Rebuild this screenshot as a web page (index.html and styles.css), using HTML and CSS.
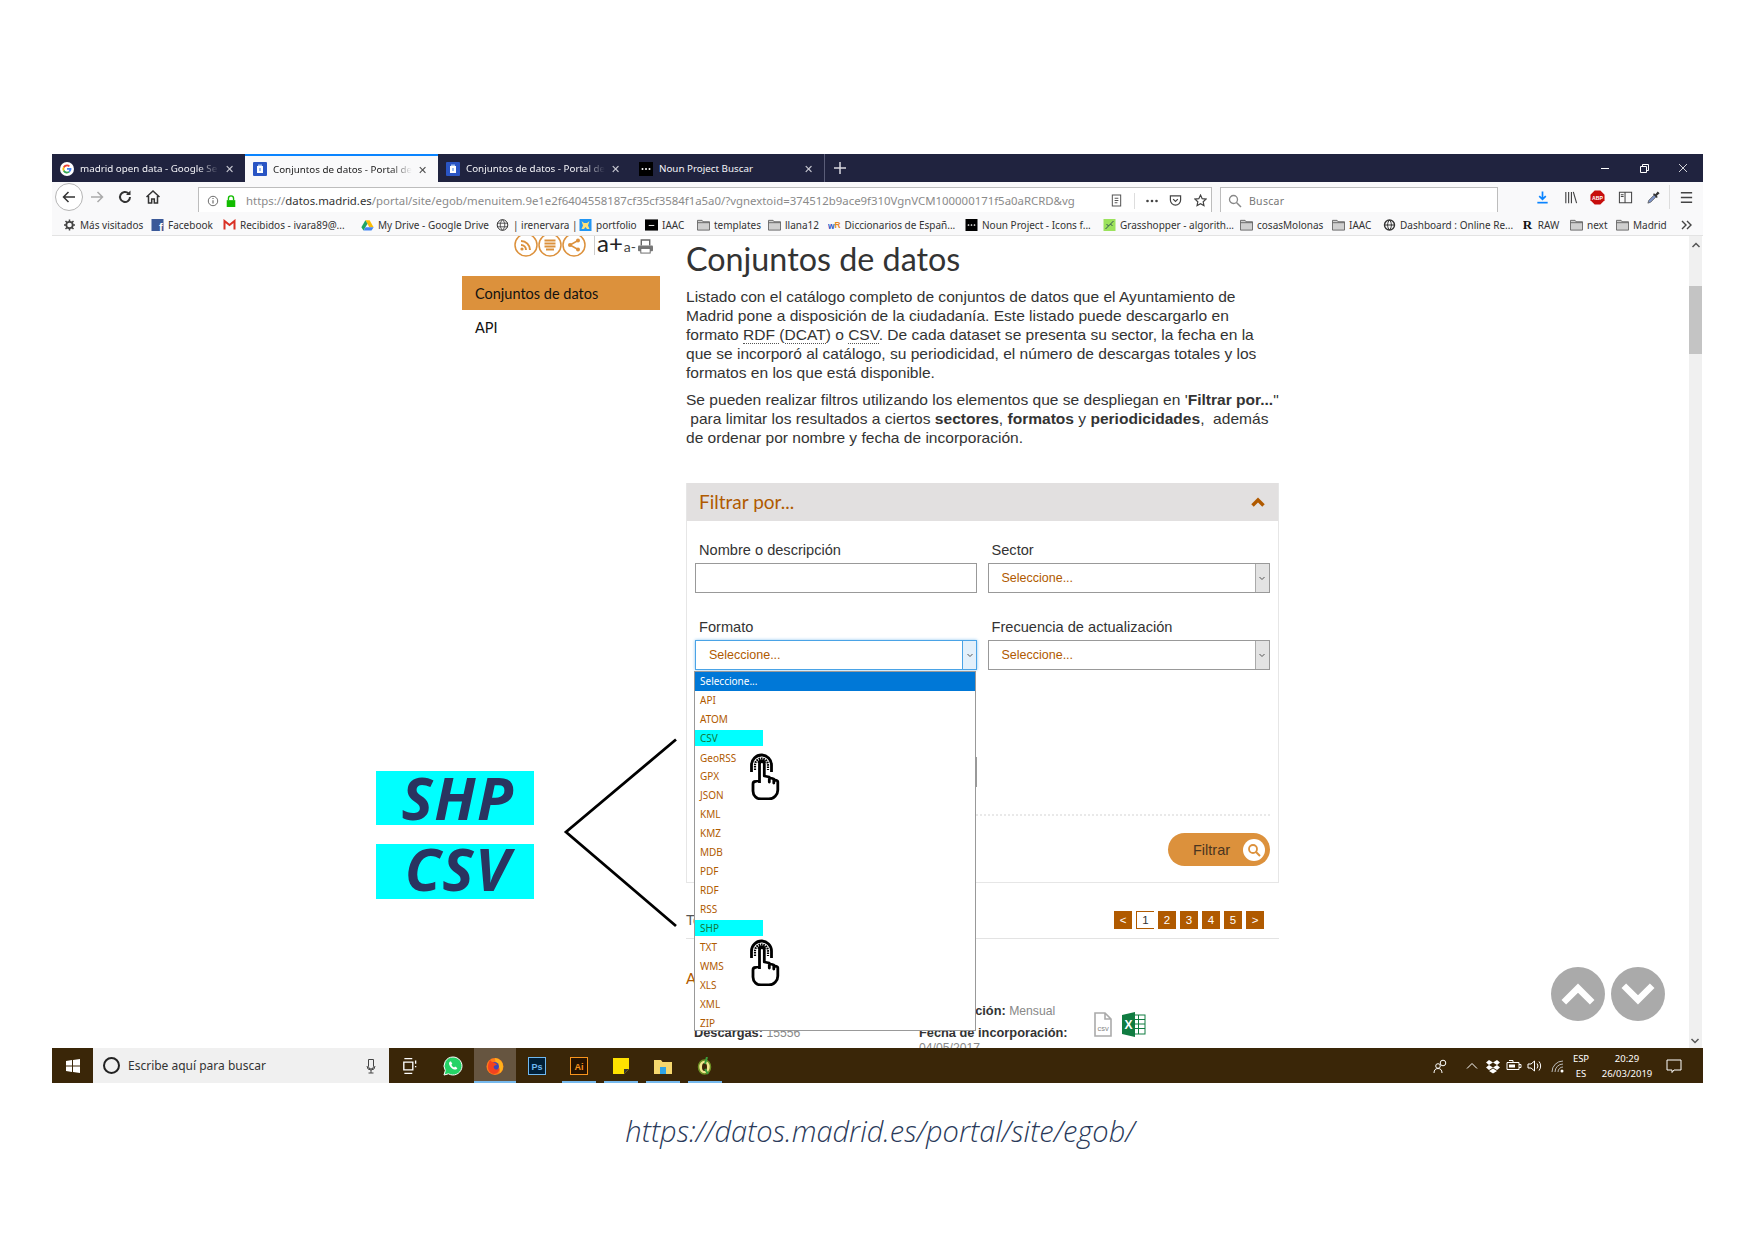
FILE: index.html
```html
<!DOCTYPE html>
<html lang="es">
<head>
<meta charset="utf-8">
<title>Conjuntos de datos</title>
<link rel="stylesheet" href="styles.css">
</head>
<body>
<svg class="sprite" width="0" height="0" aria-hidden="true">
  <symbol id="folder" viewBox="0 0 14 12"><path d="M.5 11.5V1h5l1 1.5h7v9z" fill="#cfcfcf" stroke="#666" stroke-width="1"/><path d="M.5 3.5h13" stroke="#666"/></symbol>
  <symbol id="madrid" viewBox="0 0 14 14"><rect width="14" height="14" rx="1" fill="#2a55c4"/><path d="M4 4h6v7H4z" fill="#fff"/><path d="M5 2.500h4V4H5zM6 6h2v3H6z" fill="#9fc0f0"/></symbol>
  <symbol id="noun" viewBox="0 0 14 14"><rect width="14" height="14" fill="#000"/><circle cx="3.500" cy="7" r="1" fill="#fff"/><circle cx="7" cy="7" r="1" fill="#fff"/><circle cx="10.500" cy="7" r="1" fill="#fff"/></symbol>
  <symbol id="hand" viewBox="0 0 30 47">
    <path d="M1.500 19V12A10 10 0 0 1 21.500 12V19" fill="none" stroke="#000" stroke-width="2.800"/>
    <path d="M5 17V12A6.500 6.500 0 0 1 18 12V17" fill="none" stroke="#000" stroke-width="2.200" stroke-dasharray="1.600 .8"/>
    <path d="M8.500 10A3.300 3.300 0 0 1 15 10" fill="none" stroke="#000" stroke-width="2"/>
    <path d="M9.500 30V11a2.400 2.400 0 0 1 4.800 0v12l5 1v5-4.500l4.500 1.500v4-3.500l3 1a1.500 1.500 0 0 1 1 1.500V37a9 9 0 0 1-9 9H11a8 8 0 0 1-8-8v-7a2.500 2.500 0 0 1 2.500-2.500l4-1" fill="#fff" stroke="#000" stroke-width="2.800" stroke-linejoin="round"/>
  </symbol>
  <symbol id="chev" viewBox="0 0 8 6"><path d="M1.500 2l2.500 2.500L6.500 2" fill="none" stroke="#555" stroke-width="1"/></symbol>
</svg>

<div class="page">
  <div class="browser">
    <div class="tabbar">
      <div class="tab">
        <svg class="tab-ico" viewBox="0 0 14 14"><circle cx="7" cy="7" r="7" fill="#fff"/><path d="M7 2.500a4.500 4.500 0 0 1 3 1.200L8.800 5A2.700 2.700 0 0 0 4.500 6L3 4.800A4.500 4.500 0 0 1 7 2.500z" fill="#ea4335"/><path d="M3 4.800L4.500 6a2.800 2.800 0 0 0 0 2L3 9.200a4.500 4.500 0 0 1 0-4.400z" fill="#fbbc05"/><path d="M3 9.200L4.500 8a2.700 2.700 0 0 0 4 1.200l1.400 1.100A4.500 4.500 0 0 1 3 9.200z" fill="#34a853"/><path d="M7 6h4.400a4.500 4.500 0 0 1-1.500 4.300L8.500 9.200A1.800 1.800 0 0 0 9.300 7.800H7z" fill="#4285f4"/></svg>
        <span class="tab-text">madrid open data - Google Se</span>
        <span class="tab-x">✕</span>
      </div>
      <div class="tab is-active">
        <svg class="tab-ico"><use href="#madrid"/></svg>
        <span class="tab-text">Conjuntos de datos - Portal de</span>
        <span class="tab-x">✕</span>
      </div>
      <div class="tab">
        <svg class="tab-ico"><use href="#madrid"/></svg>
        <span class="tab-text">Conjuntos de datos - Portal de</span>
        <span class="tab-x">✕</span>
      </div>
      <div class="tab is-last">
        <svg class="tab-ico"><use href="#noun"/></svg>
        <span class="tab-text">Noun Project Buscar</span>
        <span class="tab-x">✕</span>
      </div>
      <svg class="tab-plus" viewBox="0 0 12 12"><path d="M6 0v12M0 6h12" stroke="#d8d8e0" stroke-width="1.500"/></svg>
      <div class="winbtns">
        <svg viewBox="0 0 12 12"><path d="M2 6.500h8" stroke="#fff"/></svg>
        <svg viewBox="0 0 12 12"><path d="M2.500 4.500h6v6h-6zM4.500 4.500v-2h6v6h-2" fill="none" stroke="#fff"/></svg>
        <svg viewBox="0 0 12 12"><path d="M2 2l8 8M10 2l-8 8" stroke="#fff" stroke-width=".8"/></svg>
      </div>
    </div>

    <div class="toolbar">
      <div class="navbtn is-back"><svg viewBox="0 0 16 16"><path d="M14 8H2.500M7.500 3L2.500 8l5 5" fill="none" stroke="#333" stroke-width="1.500"/></svg></div>
      <div class="navbtn"><svg viewBox="0 0 16 16"><path d="M2 8h11.500M8.500 3l5 5-5 5" fill="none" stroke="#aaa" stroke-width="1.500"/></svg></div>
      <div class="navbtn"><svg viewBox="0 0 16 16"><path d="M13 8a5 5 0 1 1-1.500-3.600" fill="none" stroke="#333" stroke-width="2"/><path d="M13.500 1.500v4.500H9z" fill="#333"/></svg></div>
      <div class="navbtn"><svg viewBox="0 0 16 16"><path d="M1.500 8L8 2l6.500 6M3.500 7v7h3.200V10h2.600v4h3.200V7" fill="none" stroke="#333" stroke-width="1.500"/></svg></div>
      <div class="urlbar">
        <svg class="url-ico" viewBox="0 0 14 14"><circle cx="7" cy="7" r="5.500" fill="none" stroke="#555"/><path d="M7 6v4M7 3.500v1.200" stroke="#555" stroke-width="1.200"/></svg>
        <svg class="url-ico" viewBox="0 0 14 14"><rect x="2" y="6" width="10" height="8" fill="#12bc00"/><path d="M4 6V4a3 3 0 0 1 6 0v2" fill="none" stroke="#12bc00" stroke-width="1.600"/></svg>
        <span class="url-text">https://<b>datos.madrid.es</b>/portal/site/egob/menuitem.9e1e2f6404558187cf35cf3584f1a5a0/?vgnextoid=374512b9ace9f310VgnVCM100000171f5a0aRCRD&amp;vg</span>
        <svg class="url-act is-reader" viewBox="0 0 14 14"><path d="M2.500 1h9v12h-9zM5 4.500h4M5 7h4M5 9.500h3" fill="none" stroke="#555" stroke-width="1.100"/></svg>
        <i class="url-sep"></i>
        <svg class="url-dots" viewBox="0 0 14 14"><circle cx="2.500" cy="7" r="1.300" fill="#444"/><circle cx="7" cy="7" r="1.300" fill="#444"/><circle cx="11.500" cy="7" r="1.300" fill="#444"/></svg>
        <svg class="url-act is-pocket" viewBox="0 0 14 14"><path d="M1.500 2h11v4.500a5.500 5.500 0 0 1-11 0z" fill="none" stroke="#444" stroke-width="1.300"/><path d="M4.500 5.500L7 8l2.500-2.500" fill="none" stroke="#444" stroke-width="1.300"/></svg>
        <svg class="url-act is-star" viewBox="0 0 14 14"><path d="M7 1.200l1.800 3.800 4.100.5-3 2.900.8 4.100L7 10.500l-3.700 2 .8-4.100-3-2.900 4.100-.5z" fill="none" stroke="#444" stroke-width="1.300"/></svg>
      </div>
      <div class="searchbar">
        <svg class="url-ico" viewBox="0 0 14 14"><circle cx="5.500" cy="5.500" r="4" fill="none" stroke="#888" stroke-width="1.300"/><path d="M8.500 8.500l4.500 4.500" stroke="#888" stroke-width="1.500"/></svg>
        <span>Buscar</span>
      </div>
      <div class="tools">
        <svg viewBox="0 0 16 16"><path d="M8 1.500v8M4.500 6.500L8 10l3.500-3.500" fill="none" stroke="#0a84ff" stroke-width="1.800"/><path d="M2.500 13.500h11" stroke="#0a84ff" stroke-width="1.800"/></svg>
        <svg viewBox="0 0 16 16"><path d="M3 2v12M6 2v12M9 2v12M11 2l3.500 12" fill="none" stroke="#444" stroke-width="1.200"/></svg>
        <svg viewBox="0 0 16 16"><path d="M5 .5h6L15.500 5v6L11 15.500H5L.5 11V5z" fill="#c70d0c"/><text x="8" y="10.500" class="abp">ABP</text></svg>
        <svg viewBox="0 0 16 16"><path d="M1.500 2.500h13v11h-13zM7.500 2.500v11M3 5h3M3 7h3" fill="none" stroke="#444" stroke-width="1.100"/></svg>
        <svg viewBox="0 0 16 16"><path d="M2 14l1-3 6-6 2 2-6 6z" fill="#7d94c8" stroke="#555" stroke-width=".8"/><path d="M8.500 3.500l1.500 1 2.500-3 2 2-3 2.500 1 1.500-1 1-4-4z" fill="#333"/></svg>
        <i class="tool-sep"></i>
        <svg viewBox="0 0 16 16"><path d="M2 3h12M2 8h12M2 13h12" stroke="#444" stroke-width="1.500"/></svg>
      </div>
    </div>

    <div class="bookmarks">
      <span class="bm"><svg class="bm-ico" viewBox="0 0 12 12"><circle cx="6" cy="6" r="3.200" fill="none" stroke="#444" stroke-width="1.800"/><path d="M6 .5v2.500M6 9v2.500M.5 6h2.500M9 6h2.500M2 2l1.800 1.800M8.200 8.200L10 10M10 2L8.200 3.800M3.800 8.200L2 10" stroke="#444" stroke-width="1.500"/></svg>Más visitados</span>
      <span class="bm"><svg class="bm-ico" viewBox="0 0 12 12"><rect width="12" height="12" fill="#3b5998"/><text x="7.500" y="11.500" class="fb">f</text></svg>Facebook</span>
      <span class="bm"><svg class="bm-ico" viewBox="0 0 12 12"><path d="M1 10.500V2l5 4 5-4v8.500" fill="none" stroke="#d93025" stroke-width="2"/></svg>Recibidos - ivara89@...</span>
      <span class="bm"><svg class="bm-ico" viewBox="0 0 14 12"><path d="M4.700 1h4.600l4.300 7.300H9z" fill="#fbbc05"/><path d="M4.700 1L.4 8.300 2.700 12 7 4.700z" fill="#1fa463"/><path d="M2.700 12h8.600l2.300-3.700H5z" fill="#4285f4"/></svg>My Drive - Google Drive</span>
      <span class="bm"><svg class="bm-ico" viewBox="0 0 12 12"><circle cx="6" cy="6" r="5.300" fill="none" stroke="#333"/><path d="M.8 4.200h10.400M.8 7.800h10.400M6 .7C3 3.500 3 8.500 6 11.300 9 8.500 9 3.500 6 .7" fill="none" stroke="#333" stroke-width=".8"/></svg>| irenervara |</span>
      <span class="bm"><svg class="bm-ico" viewBox="0 0 12 12"><rect width="12" height="12" fill="#2196f3"/><path d="M2 2l2.500 2h3L10 2 8.500 6.500 10 10H7.500L6 8 4.500 10H2l1.500-3.500z" fill="#ffe27a"/></svg>portfolio</span>
      <span class="bm"><svg class="bm-ico" viewBox="0 0 14 12"><rect width="14" height="12" fill="#000"/><path d="M4 6.500h6" stroke="#fff"/></svg>IAAC</span>
      <span class="bm"><svg class="bm-ico"><use href="#folder"/></svg>templates</span>
      <span class="bm"><svg class="bm-ico"><use href="#folder"/></svg>llana12</span>
      <span class="bm"><svg class="bm-ico" viewBox="0 0 14 12"><text x="0" y="10" class="wr-w">w</text><text x="7" y="9" class="wr-r">R</text></svg>Diccionarios de Españ...</span>
      <span class="bm"><svg class="bm-ico"><use href="#noun"/></svg>Noun Project - Icons f...</span>
      <span class="bm"><svg class="bm-ico" viewBox="0 0 12 12"><rect width="12" height="12" fill="#9be25c"/><path d="M2 10L10 2M5 7l-2-2M7 5l2 2" stroke="#355" stroke-width="1"/></svg>Grasshopper - algorith...</span>
      <span class="bm"><svg class="bm-ico"><use href="#folder"/></svg>cosasMolonas</span>
      <span class="bm"><svg class="bm-ico"><use href="#folder"/></svg>IAAC</span>
      <span class="bm"><svg class="bm-ico" viewBox="0 0 12 12"><circle cx="6" cy="6" r="5" fill="none" stroke="#333" stroke-width="1.400"/><path d="M1 6h10M6 1C3.500 3.500 3.500 8.500 6 11 8.500 8.500 8.500 3.500 6 1" fill="none" stroke="#333"/></svg>Dashboard : Online Re...</span>
      <span class="bm"><b class="bm-r">R</b>RAW</span>
      <span class="bm"><svg class="bm-ico"><use href="#folder"/></svg>next</span>
      <span class="bm"><svg class="bm-ico"><use href="#folder"/></svg>Madrid</span>
      <svg class="bm-more" viewBox="0 0 12 10"><path d="M1 1l4 4-4 4M6 1l4 4-4 4" fill="none" stroke="#444" stroke-width="1.400"/></svg>
    </div>

    <div class="viewport">
      <aside class="side">
        <div class="share">
          <svg class="share-ico" viewBox="0 0 24 24"><circle cx="12" cy="12" r="11" fill="#fff" stroke="#dc913c" stroke-width="1.500"/><path d="M7 8a9 9 0 0 1 9 9M7 12a5 5 0 0 1 5 5" fill="none" stroke="#dc913c" stroke-width="2"/><circle cx="8" cy="16" r="1.600" fill="#dc913c"/></svg>
          <svg class="share-ico" viewBox="0 0 24 24"><circle cx="12" cy="12" r="11" fill="#fff" stroke="#dc913c" stroke-width="1.500"/><path d="M6.500 7.500h11M6.500 10.500h11M6.500 13.500h11M8 16.500h8" stroke="#dc913c" stroke-width="1.800"/></svg>
          <svg class="share-ico" viewBox="0 0 24 24"><circle cx="12" cy="12" r="11" fill="#fff" stroke="#dc913c" stroke-width="1.500"/><path d="M16 7.500L8 12l8 4.500" fill="none" stroke="#dc913c" stroke-width="1.500"/><circle cx="16" cy="7.500" r="2" fill="#dc913c"/><circle cx="8" cy="12" r="2" fill="#dc913c"/><circle cx="16" cy="16.500" r="2" fill="#dc913c"/></svg>
          <span class="font-up">a+</span><span class="font-down">a-</span>
          <svg class="print" viewBox="0 0 18 16"><path d="M4.500 7V1h9v6" fill="#fff" stroke="#666" stroke-width="1.500"/><rect x="1" y="7" width="16" height="6" rx="1" fill="#777"/><rect x="4" y="10" width="10" height="5" fill="#fff" stroke="#666"/></svg>
        </div>
        <a class="side-link is-current">Conjuntos de datos</a>
        <a class="side-link">API</a>
      </aside>

      <main class="main">
        <h1 class="title">Conjuntos de datos</h1>
        <p class="lead">Listado con el catálogo completo de conjuntos de datos que el Ayuntamiento de Madrid pone a disposición de la ciudadanía. Este listado puede descargarlo en formato <abbr>RDF </abbr> (<abbr>DCAT</abbr>) o <abbr>CSV</abbr>. De cada dataset se presenta su sector, la fecha en la que se incorporó al catálogo, su periodicidad, el número de descargas totales y los formatos en los que está disponible.</p>
        <p class="lead">Se pueden realizar filtros utilizando los elementos que se despliegan en '<b>Filtrar por...</b>"<br>&nbsp;para limitar los resultados a ciertos <b>sectores</b>, <b>formatos</b> y <b>periodicidades</b>,&nbsp; además de ordenar por nombre y fecha de incorporación.</p>

        <section class="panel">
          <header class="panel-head">
            <span>Filtrar por...</span>
            <svg viewBox="0 0 14 10"><path d="M1.500 8.500L7 3l5.500 5.500" fill="none" stroke="#b05a00" stroke-width="3.500"/></svg>
          </header>
          <div class="form">
            <div class="field">
              <label>Nombre o descripción</label>
              <div class="box"></div>
            </div>
            <div class="field">
              <label>Sector</label>
              <div class="box is-select"><span>Seleccione...</span><i class="arrow"><svg><use href="#chev"/></svg></i></div>
            </div>
            <div class="field">
              <label>Formato</label>
              <div class="box is-select is-focus"><span>Seleccione...</span><i class="arrow"><svg><use href="#chev"/></svg></i></div>
              <ul class="dropdown">
                <li class="is-selected">Seleccione...</li>
                <li>API</li>
                <li>ATOM</li>
                <li class="is-hit"><span>CSV</span></li>
                <li>GeoRSS</li>
                <li>GPX</li>
                <li>JSON</li>
                <li>KML</li>
                <li>KMZ</li>
                <li>MDB</li>
                <li>PDF</li>
                <li>RDF</li>
                <li>RSS</li>
                <li class="is-hit"><span>SHP</span></li>
                <li>TXT</li>
                <li>WMS</li>
                <li>XLS</li>
                <li>XML</li>
                <li>ZIP</li>
              </ul>
            </div>
            <div class="field">
              <label>Frecuencia de actualización</label>
              <div class="box is-select"><span>Seleccione...</span><i class="arrow"><svg><use href="#chev"/></svg></i></div>
            </div>
            <div class="field is-low">
              <label>Ordenar por</label>
              <div class="box"></div>
            </div>
          </div>
          <div class="panel-foot">
            <button class="go">Filtrar<span class="go-ico"><svg viewBox="0 0 14 14"><circle cx="6" cy="6" r="4" fill="none" stroke="#dc913c" stroke-width="1.800"/><path d="M9 9l4 4" stroke="#dc913c" stroke-width="2"/></svg></span></button>
          </div>
        </section>

        <div class="pager-row">
          <span class="total">Total</span>
          <nav class="pager">
            <a>&lt;</a><a class="is-on">1</a><a>2</a><a>3</a><a>4</a><a>5</a><a>&gt;</a>
          </nav>
        </div>

        <article class="dataset">
          <h3>Aparcamiento público de bicicletas</h3>
          <div class="meta">
            <div class="meta-col">
              <p class="is-spaced"><b>Descargas:</b> 15556</p>
            </div>
            <div class="meta-col">
              <p><b>Actualización:</b> Mensual</p>
              <p><b>Fecha de incorporación:</b></p>
              <p class="date">04/05/2017</p>
            </div>
            <div class="files">
              <svg viewBox="0 0 18 25"><path d="M1 1h10l6 6v17H1zM11 1v6h6" fill="#fff" stroke="#aaa" stroke-width="1.600"/><text x="9" y="19" class="csv-lbl">csv</text></svg>
              <svg viewBox="0 0 24 25"><rect x="10" y="3" width="13" height="19" fill="#fff" stroke="#107c41"/><path d="M10 7.500h13M10 12h13M10 16.500h13M16.500 3v19" stroke="#107c41"/><path d="M0 3l13-3v25L0 22z" fill="#107c41"/><text x="6.500" y="17" class="xl-lbl">X</text></svg>
            </div>
          </div>
        </article>
      </main>

      <div class="scrollbar">
        <svg viewBox="0 0 10 8"><path d="M1.500 6L5 2.500 8.500 6" fill="none" stroke="#555" stroke-width="1.500"/></svg>
        <i class="thumb"></i>
        <svg class="sb-down" viewBox="0 0 10 8"><path d="M1.500 2L5 5.500 8.500 2" fill="none" stroke="#555" stroke-width="1.500"/></svg>
      </div>

      <div class="jump">
        <span class="jump-btn"><svg viewBox="0 0 30 22"><path d="M3 18L15 6l12 12" fill="none" stroke="#fff" stroke-width="5.500"/></svg></span>
        <span class="jump-btn"><svg viewBox="0 0 30 22"><path d="M3 4l12 12L27 4" fill="none" stroke="#fff" stroke-width="5.500"/></svg></span>
      </div>
    </div>

    <div class="taskbar">
      <div class="start"><svg viewBox="0 0 14 14"><path d="M0 2l6-.9V6.600H0zM7 1l7-1v6.600H7zM0 7.400h6v5.500L0 12zM7 7.400h7V14l-7-1z" fill="#fff"/></svg></div>
      <div class="tsearch">
        <i class="cortana"></i>
        <span>Escribe aquí para buscar</span>
        <svg class="mic" viewBox="0 0 10 16"><path d="M2.500 1.500h5v7a2.500 2.500 0 0 1-5 0zM1 8a4 4 0 0 0 8 0M5 12v3M2.500 15h5" fill="none" stroke="#444"/></svg>
      </div>
      <div class="slot"><svg viewBox="0 0 16 16"><path d="M3 1.500h7M3 14.500h7M2.500 4.500h8v7h-8zM13 3v3M13 8v1" fill="none" stroke="#fff" stroke-width="1.200"/></svg></div>
      <div class="slot is-wa"><svg viewBox="0 0 20 20"><path d="M10 1a9 9 0 0 0-7.700 13.600L1 19l4.500-1.200A9 9 0 1 0 10 1z" fill="#25d366" stroke="#fff" stroke-width="1"/><path d="M7 5.500c-1 .7-1.300 2-.5 3.700 1 2 2.800 3.700 4.800 4.300 1.500.4 2.800-.3 3-1.600l-2.200-1.300-1 1c-1.200-.5-2.300-1.600-2.800-2.800l1-1L8 5.400z" fill="#fff"/></svg></div>
      <div class="slot is-active"><svg viewBox="0 0 20 20"><circle cx="10" cy="10.500" r="8.500" fill="#ff7a1a"/><path d="M10 2c5 1 8 4 8 8.500a8 8 0 0 1-4 7c2-3 1-6-2-8-1-2-2-5-2-7.500z" fill="#ffb11a"/><circle cx="9.500" cy="10.500" r="4.500" fill="#3d48b8"/><path d="M5 4c2 3 6 2 7 5-2 0-4 1-3 3 1 2 4 2 5 0 1 3-2 6-5 6-3 0-6-3-6-7 0-3 1-5 2-7z" fill="#f3431f"/></svg></div>
      <div class="slot"><svg viewBox="0 0 18 18"><rect x=".5" y=".5" width="17" height="17" fill="#001e36" stroke="#6fb8f0"/><text x="9" y="13" class="ps">Ps</text></svg></div>
      <div class="slot is-run"><svg viewBox="0 0 18 18"><rect x=".5" y=".5" width="17" height="17" fill="#261300" stroke="#f7941d"/><text x="9" y="13" class="ai">Ai</text></svg></div>
      <div class="slot is-run is-note"><svg viewBox="0 0 16 16"><path d="M0 0h16v11l-5 5H0z" fill="#ffe100"/><path d="M16 11h-5v5z" fill="#333"/></svg></div>
      <div class="slot is-run"><svg viewBox="0 0 18 16"><path d="M0 2h7l1.500 2H18v12H0z" fill="#f5d76e"/><rect x="6" y="9" width="6" height="7" fill="#2fa4e7"/></svg></div>
      <div class="slot is-run"><svg viewBox="0 0 16 18"><ellipse cx="7.500" cy="10" rx="6" ry="7" fill="#f0e68c" stroke="#6b8e23" stroke-width="1.500"/><ellipse cx="7.500" cy="10" rx="2.500" ry="4" fill="#3a2608"/><path d="M8 12l3 5M10 0l-2 7" stroke="#3c9e3c" stroke-width="2"/></svg></div>
      <div class="tray">
        <svg viewBox="0 0 16 16"><circle cx="10" cy="5" r="2.800" fill="none" stroke="#fff"/><circle cx="5" cy="8" r="2.300" fill="none" stroke="#fff"/><path d="M1 15c0-3 1.500-4.500 4-4.500s4 1.500 4 4.500" fill="none" stroke="#fff"/></svg>
        <svg class="t-gap" viewBox="0 0 16 16"><path d="M3 10.500L8 5.500l5 5" fill="none" stroke="#fff"/></svg>
        <svg viewBox="0 0 16 16"><path d="M4 2L1 4.500 4 7 1 9.500 4 12l4-2.500 4 2.500 3-2.500L12 7l3-2.500L12 2 8 4.500zM4 7l4-2.500L12 7 8 9.500zM4 13l4 2.500 4-2.500-4-2.500z" fill="#fff"/></svg>
        <svg viewBox="0 0 16 16"><path d="M1 4.500h12v7H1zM13 6.500h2v3h-2M3 2.500h4v2" fill="none" stroke="#fff"/><rect x="3" y="6.500" width="6" height="3" fill="#fff"/></svg>
        <svg viewBox="0 0 16 16"><path d="M1 6h3l3.500-3v10L4 10H1zM10 5.500a4 4 0 0 1 0 5M12 3.500a7 7 0 0 1 0 9" fill="none" stroke="#fff"/></svg>
        <svg class="t-wifi" viewBox="0 0 16 16"><path d="M3 14a11 11 0 0 1 11-11M6 14a8 8 0 0 1 8-8M9 14a5 5 0 0 1 5-5" fill="none" stroke="#bbb"/><circle cx="13" cy="13" r="1.500" fill="#fff"/></svg>
        <div class="lang"><span>ESP</span><span>ES</span></div>
        <div class="clock"><span>20:29</span><span>26/03/2019</span></div>
        <svg class="t-note" viewBox="0 0 16 16"><path d="M1 2h14v10H8l-2 2.500V12H1z" fill="none" stroke="#fff"/></svg>
      </div>
    </div>
  </div>

  <p class="caption">https://datos.madrid.es/portal/site/egob/</p>

  <div class="tag is-shp">SHP</div>
  <div class="tag is-csv">CSV</div>
  <svg class="bracket" viewBox="0 0 115 192"><path d="M113 1.500L3 94l110 94" fill="none" stroke="#000" stroke-width="2.800"/></svg>
  <svg class="pointer is-one"><use href="#hand"/></svg>
  <svg class="pointer is-two"><use href="#hand"/></svg>
</div>
</body>
</html>
```

FILE: styles.css
```css
* { box-sizing: border-box; }
html, body { margin: 0; padding: 0; background: #fff; }
body { font-family: "Liberation Sans", Arial, sans-serif; color: #333; }
.sprite { position: absolute; }
svg { display: block; }
.page { position: relative; width: 1755px; height: 1241px; padding: 154px 52px 0; overflow: hidden; }
.browser { width: 1651px; display: flex; flex-direction: column; }

/* tab strip */
.tabbar { height: 28px; background: #20233f; display: flex; align-items: stretch; font-family: "Noto Sans", sans-serif; font-size: 9.800px; color: #f4f4f8; }
.tab { width: 193px; display: flex; align-items: center; padding: 1px 0 0 8px; }
.tab.is-last { width: 194px; border-right: 1px solid #5a5d78; }
.tab.is-active { background: #f9f9fa; color: #222; border-top: 2px solid #0a84ff; padding-top: 0; }
.tab-ico { width: 14px; height: 14px; flex: none; }
.tab-text { width: 139px; margin-left: 6px; white-space: nowrap; overflow: hidden; -webkit-mask-image: linear-gradient(90deg, #000 85%, transparent); mask-image: linear-gradient(90deg, #000 85%, transparent); }
.tab.is-last .tab-text { -webkit-mask-image: none; mask-image: none; }
.tab-x { margin-left: 6px; font-size: 11px; line-height: 1; opacity: .8; }
.tab-plus { width: 12px; height: 12px; align-self: center; margin-left: 9px; }
.winbtns { margin-left: auto; display: flex; align-items: center; gap: 27px; padding-right: 14px; }
.winbtns svg { width: 12px; height: 12px; }

/* toolbar */
.toolbar { height: 30px; background: #f9f9fa; display: flex; align-items: flex-end; padding-left: 3px; }
.navbtn { width: 28px; height: 28px; display: flex; align-items: center; justify-content: center; align-self: center; }
.navbtn svg { width: 16px; height: 16px; }
.navbtn.is-back { border: 1px solid #b5b5b5; border-radius: 50%; background: #fff; }
.urlbar { width: 1014px; height: 25px; margin-left: 31px; background: #fff; border: 1px solid #bdbdbd; border-bottom: 0; display: flex; align-items: center; padding: 1px 0 0 8px; font-family: "Noto Sans", sans-serif; }
.url-ico { width: 12px; height: 12px; flex: none; margin-right: 6px; }
.url-text { width: 832px; margin-left: 3px; font-size: 11.400px; color: #8a8a8a; white-space: nowrap; overflow: hidden; }
.url-text b { font-weight: 400; color: #333; }
.url-act { width: 13px; height: 13px; flex: none; margin-left: 11px; }
.url-act.is-reader { margin-left: 32px; }
.url-act.is-pocket { margin-left: 10px; }
.url-act.is-star { margin-left: 12px; }
.url-sep { width: 1px; height: 16px; background: #ddd; margin-left: 11px; }
.url-dots { width: 14px; height: 14px; flex: none; margin-left: 10px; }
.searchbar { width: 278px; height: 25px; margin-left: 8px; background: #fff; border: 1px solid #bdbdbd; border-bottom: 0; display: flex; align-items: center; padding: 1px 0 0 7px; font-family: "Noto Sans", sans-serif; font-size: 10.500px; color: #777; letter-spacing: .3px; }
.searchbar .url-ico { margin-right: 7px; width: 14px; height: 14px; }
.tools { margin-left: 37px; display: flex; align-items: center; gap: 12.700px; height: 30px; }
.tools svg { width: 15px; height: 15px; flex: none; }
.tool-sep { width: 1px; height: 24px; background: #ddd; margin: 0 -4px; }
.abp { font: 700 5.500px "Liberation Sans", sans-serif; fill: #fff; text-anchor: middle; }

/* bookmarks */
.bookmarks { height: 24px; background: #f9f9fa; border-bottom: 1px solid #e3e3e3; display: grid; grid-template-columns: 88px 72px 138px 135px 83px 66px 52px 71px 59.500px 137.500px 138px 137px 92px 51px 139.700px 47.300px 46px 65px 20px; align-items: center; padding: 2px 0 0 11px; font-family: "Noto Sans", sans-serif; font-size: 10px; color: #333; }
.bm { display: flex; align-items: center; white-space: nowrap; overflow: hidden; }
.bm-ico { width: 13px; height: 12px; flex: none; margin-right: 4px; }
.bm-r { font: 700 13px "Liberation Serif", serif; color: #111; width: 15px; flex: none; }
.bm-more { width: 12px; height: 10px; }
.fb { font: 700 11px "Liberation Sans", sans-serif; fill: #fff; }
.wr-w { font: 700 9px "Liberation Sans", sans-serif; fill: #2a55c4; }
.wr-r { font: 700 9px "Liberation Sans", sans-serif; fill: #e8871e; }

/* page inside the browser */
.viewport { position: relative; height: 812px; background: #fff; overflow: hidden; display: flex; padding-left: 410px; }
.side { width: 198px; flex: none; font-family: Lato, sans-serif; font-size: 14.500px; color: #111; }
.share { display: flex; align-items: center; height: 57px; margin-top: -17px; padding: 0 0 9px 52px; }
.share-ico { width: 24px; height: 24px; flex: none; margin-top: 4px; }
.font-up { font-size: 24px; margin-left: 8px; color: #222; line-height: 1; border-left: 1px solid #ccc; padding-left: 2px; }
.font-down { font-size: 14px; margin-left: 1px; margin-top: 6px; color: #444; }
.print { width: 17px; height: 15px; margin-left: 1px; margin-top: 6px; }
.side-link { display: block; height: 34px; line-height: 34px; padding: 1px 0 0 13px; }
.side-link.is-current { background: #dc913c; }
.main { width: 593px; margin-left: 26px; flex: none; }
.title { margin: 3px 0 8px; font-family: Lato, sans-serif; font-weight: 400; font-size: 32.300px; line-height: 40px; color: #333; }
.lead { margin: 0 0 8px; font-size: 15.550px; line-height: 19px; color: #333; }
abbr { border-bottom: 1px dotted #555; }
.panel { margin-top: 36px; height: 400px; border: 1px solid #e6e6e6; border-top: 0; }
.panel-head { height: 38px; background: #e2e0e0; display: flex; align-items: center; justify-content: space-between; padding: 0 13px 1px 12px; font-family: Lato, sans-serif; font-size: 19px; color: #b05a00; }
.panel-head svg { width: 14px; height: 10px; }
.form { display: grid; grid-template-columns: 282px 282px; column-gap: 10.500px; padding: 18px 0 0 8px; }
.field { position: relative; margin-bottom: 23px; }
.field.is-low { margin-top: 40px; margin-bottom: 0; }
.field label { display: block; height: 24px; line-height: 22px; padding-left: 4px; font-size: 14.600px; color: #333; }
.box { height: 30px; border: 1px solid #999; background: #fff; }
.box.is-select { display: flex; align-items: center; justify-content: space-between; padding-left: 13px; font-size: 12.500px; color: #b05a00; }
.arrow { width: 14px; height: 28px; background: #e3e3e3; border-left: 1px solid #aaa; display: flex; align-items: center; justify-content: center; }
.arrow svg { width: 8px; height: 6px; }
.box.is-focus { border-color: #4aa3e6; box-shadow: 0 0 3px #8cc5f0; }
.box.is-focus .arrow { background: #e3f0fb; border-left-color: #4aa3e6; }
.dropdown { position: absolute; left: -1px; top: 55px; z-index: 5; width: 282px; height: 360px; margin: 0; padding: 0; list-style: none; background: #fff; border: 1px solid #999; font-family: "Noto Sans", sans-serif; font-size: 10px; color: #b05a00; }
.dropdown li { height: 18.900px; line-height: 18.900px; padding-left: 5px; }
.dropdown li.is-selected { background: #0078d7; color: #fff; }
.dropdown li.is-hit { padding-left: 0; }
.dropdown li.is-hit span { display: block; width: 68px; height: 16px; margin-top: 1px; line-height: 16px; padding-left: 5px; background: #00ffff; color: #117a3d; }
.panel-foot { margin: 27px 8px 0; border-top: 2px dotted #e9e9e9; padding-top: 17px; display: flex; justify-content: flex-end; }
.go { width: 102px; height: 33px; border: 0; border-radius: 17px; background: #dc913c; display: flex; align-items: center; padding: 0 5px 0 25px; font: 14.500px "Liberation Sans", sans-serif; color: #4a3520; }
.go-ico { width: 22px; height: 22px; border-radius: 50%; background: #fff; margin-left: auto; display: flex; align-items: center; justify-content: center; }
.go-ico svg { width: 14px; height: 14px; }
.pager-row { height: 28px; margin-top: 28px; border-bottom: 1px solid #e3e3e3; display: flex; justify-content: space-between; font-size: 14px; padding: 0 15px 0 0; }
.total { line-height: 18px; color: #555; }
.pager { display: flex; gap: 4px; height: 18px; }
.pager a { width: 18px; height: 18px; background: #b05a00; color: #fff; font-size: 11.500px; line-height: 18px; text-align: center; }
.pager a.is-on { background: #fff; color: #333; border: 1px solid #b05a00; border-right: 0; line-height: 16px; }
.dataset { padding-top: 29px; }
.dataset h3 { margin: 0; font-family: Lato, sans-serif; font-weight: 400; font-size: 15px; line-height: 20px; color: #b05a00; }
.meta { display: flex; margin-top: 12px; font-size: 12.200px; color: #888; }
.meta-col { width: 233px; padding-left: 8px; }
.meta-col + .meta-col { width: 175px; padding-left: 0; }
.meta p { margin: 0; line-height: 22px; }
.meta b { color: #333; font-size: 12.800px; }
.meta .is-spaced { margin-top: 22px; }
.meta .date { line-height: 14px; margin-top: -3px; }
.files { display: flex; gap: 10px; margin-top: 12px; }
.files svg { width: 18px; height: 25px; }
.files svg + svg { width: 24px; }
.csv-lbl { font: 7.500px "Liberation Sans", sans-serif; fill: #888; text-anchor: middle; }
.xl-lbl { font: 700 12px "Liberation Sans", sans-serif; fill: #fff; text-anchor: middle; }
.scrollbar { position: absolute; top: 0; right: 1px; bottom: 0; width: 13px; background: #f0f0f0; }
.scrollbar svg { width: 10px; height: 8px; margin: 5px auto 0; }
.thumb { display: block; height: 68px; margin-top: 37px; background: #c4c4c4; }
.scrollbar .sb-down { position: absolute; left: 1px; bottom: 3px; }
.jump { position: absolute; left: 1499px; top: 731px; display: flex; gap: 6px; }
.jump-btn { width: 54px; height: 54px; border-radius: 50%; background: #aaa; display: flex; align-items: center; justify-content: center; }
.jump-btn svg { width: 36px; height: 26px; }

/* taskbar */
.taskbar { height: 35px; background: #3a2608; display: flex; align-items: stretch; color: #fff; font-family: "Noto Sans", sans-serif; }
.start { width: 41px; display: flex; align-items: center; justify-content: center; }
.start svg { width: 14px; height: 14px; }
.tsearch { width: 296px; background: #f0f0f0; display: flex; align-items: center; padding-left: 10px; color: #333; font-size: 12px; }
.cortana { width: 17px; height: 17px; border: 2px solid #222; border-radius: 50%; margin-right: 8px; flex: none; }
.mic { width: 10px; height: 16px; margin-left: auto; margin-right: 13px; }
.slot { position: relative; width: 42px; display: flex; align-items: center; justify-content: center; }
.slot svg { width: 18px; height: 18px; }
.slot.is-wa { margin-left: 1px; }
.slot.is-active { background: #665540; box-shadow: inset 0 -2px #76b9ed; }
.slot.is-active svg { width: 20px; height: 20px; }
.slot.is-wa svg { width: 20px; height: 20px; }
.slot.is-note svg { width: 16px; height: 16px; }
.slot.is-run::after { content: ""; position: absolute; left: 4px; right: 4px; bottom: 0; height: 2px; background: #76b9ed; }
.ps { font: 700 9px "Liberation Sans", sans-serif; fill: #6fb8f0; text-anchor: middle; }
.ai { font: 700 9px "Liberation Sans", sans-serif; fill: #f7941d; text-anchor: middle; }
.tray { margin-left: auto; display: flex; align-items: center; gap: 5px; padding-right: 21px; }
.tray > svg { width: 16px; height: 16px; flex: none; }
.tray .t-gap { margin-left: 10px; }
.tray .t-wifi { margin-left: 1px; }
.tray .t-note { margin-left: 4px; }
.lang, .clock { display: flex; flex-direction: column; align-items: center; font-size: 9.500px; line-height: 15px; }
.lang { width: 22px; }
.clock { width: 60px; }

/* slide annotations */
.caption { margin: 29px 0 0; text-align: center; font-family: "Open Sans", sans-serif; font-style: italic; font-weight: 300; font-size: 29px; line-height: 38px; color: #2a3a5a; padding-left: 5px; }
.tag { position: absolute; left: 376px; width: 158px; background: #00ffff; font-family: "Open Sans", sans-serif; font-style: italic; font-weight: 700; font-size: 59px; letter-spacing: 1.500px; text-align: center; color: #2a3460; padding-left: 6px; }
.tag.is-shp { top: 771px; height: 54px; line-height: 52px; }
.tag.is-csv { top: 844px; height: 55px; line-height: 49px; }
.bracket { position: absolute; left: 563px; top: 738px; width: 115px; height: 192px; }
.pointer { position: absolute; z-index: 6; left: 750px; width: 30px; height: 47px; }
.pointer.is-one { top: 753px; }
.pointer.is-two { top: 939px; }
```
